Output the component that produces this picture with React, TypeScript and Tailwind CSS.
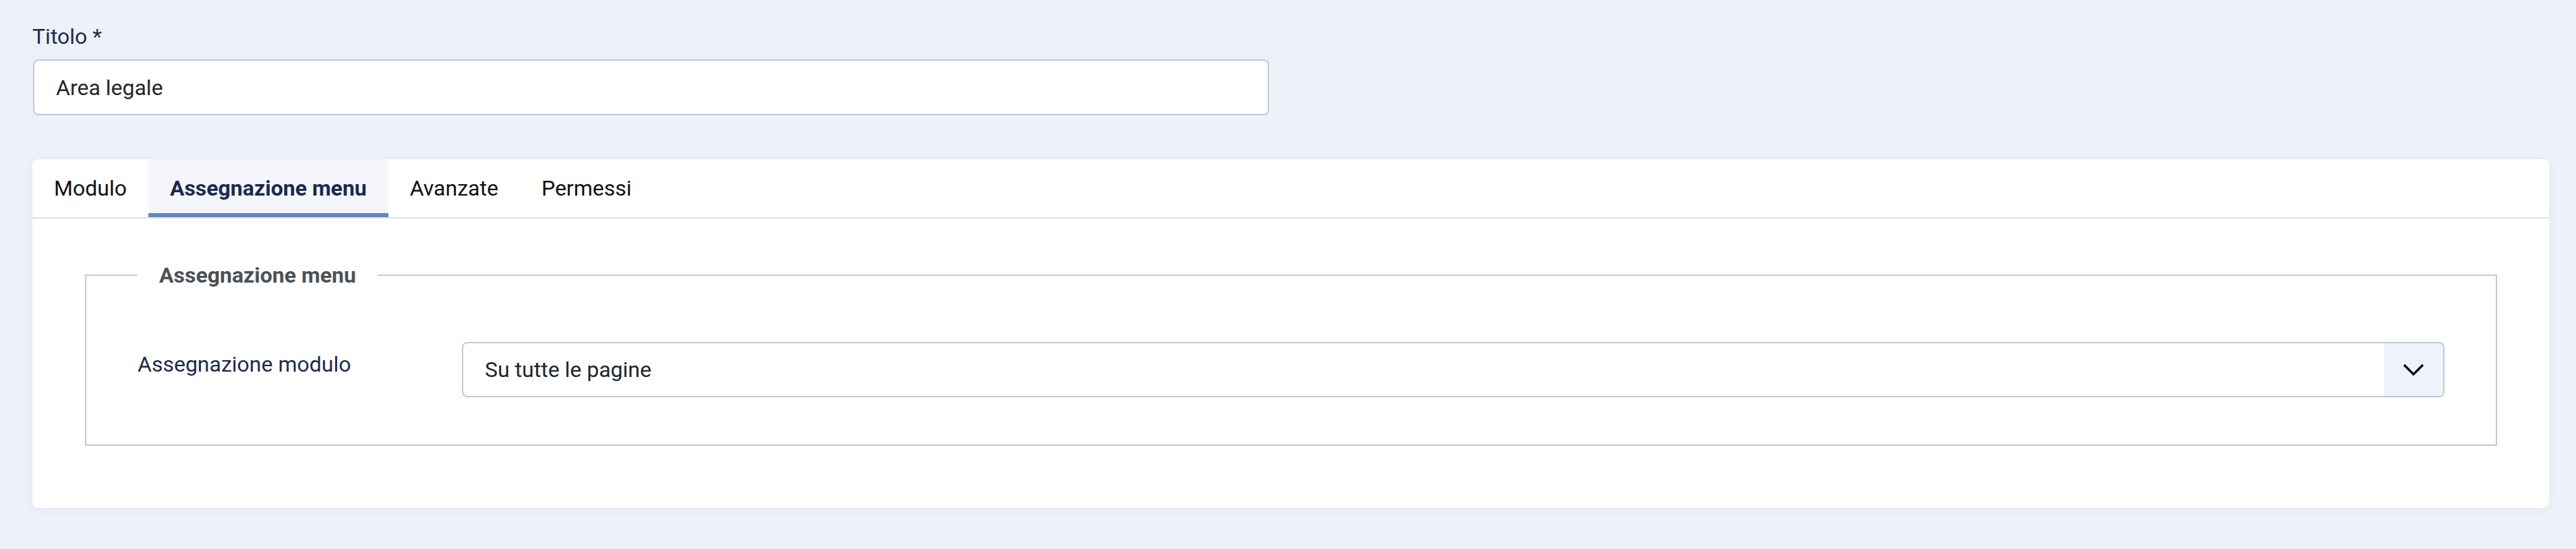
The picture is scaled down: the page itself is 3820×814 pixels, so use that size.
// Modifica modulo — scheda "Assegnazione menu"
// Layout a pixel sulla cattura 3820x814 (testo Roboto 32px)

import { useState } from 'react'

const TABS = ['Modulo', 'Assegnazione menu', 'Avanzate', 'Permessi']

function Chevron() {
  return (
    <svg width="32" height="20" viewBox="0 0 32 20" fill="none" stroke="#000" strokeWidth="3.2">
      <path d="M2 3l14 14L30 3" />
    </svg>
  )
}

export default function App() {
  const [titolo, setTitolo] = useState('Area legale')
  const [tab, setTab] = useState('Assegnazione menu')

  return (
    <div className="min-h-[814px] bg-[#edf1f9] pl-[48px] pr-[40px] pt-[30px] font-['Roboto',sans-serif] text-[32px] leading-[48px]">
      {/* Titolo */}
      <label htmlFor="titolo" className="block text-[#1c2b4d]">
        Titolo *
      </label>
      <input
        id="titolo"
        type="text"
        value={titolo}
        onChange={(e) => setTitolo(e.target.value)}
        className="mt-[10px] ml-px block h-[83px] w-[1833px] rounded-[8px] border-2 border-[#bcc8dc] bg-white px-[32px] text-[#22262a] outline-none"
      />

      {/* Card con schede */}
      <div className="mt-[65px] rounded-[8px] bg-white shadow-[0_2px_14px_rgba(30,50,90,0.06)]">
        <div className="flex border-b-2 border-[#dde2ef]">
          {TABS.map((t) => (
            <button
              key={t}
              type="button"
              onClick={() => setTab(t)}
              className={`flex h-[86px] items-center px-[32px] ${
                tab === t
                  ? 'bg-[#f5f6fb] font-bold text-[#1a2a4d] shadow-[inset_0_-6px_0_#6184c4]'
                  : 'text-[#111]'
              } ${t === 'Modulo' ? 'rounded-tl-[8px]' : ''}`}
            >
              {t}
            </button>
          ))}
        </div>

        <div className="pl-[78px] pr-[77px] pt-[60px] pb-[92px]">
          <fieldset className="border-2 border-[#bcc8dc] px-[76px] pt-[75px] pb-[70px]">
            <legend className="px-[32px] font-bold text-[#4c5158]">Assegnazione menu</legend>
            <div className="flex items-start">
              <label htmlFor="assegnazione" className="w-[481px] shrink-0 pt-[9px] text-[#1c2b4d]">
                Assegnazione modulo
              </label>
              <div
                id="assegnazione"
                className="flex h-[82px] flex-1 items-stretch overflow-hidden rounded-[8px] border-2 border-[#bcc8dc] bg-white"
              >
                <div className="flex flex-1 items-center px-[32px] text-[#22262a]">Su tutte le pagine</div>
                <div className="flex w-[88px] items-center justify-center bg-[#eef2fb]">
                  <Chevron />
                </div>
              </div>
            </div>
          </fieldset>
        </div>
      </div>
    </div>
  )
}
